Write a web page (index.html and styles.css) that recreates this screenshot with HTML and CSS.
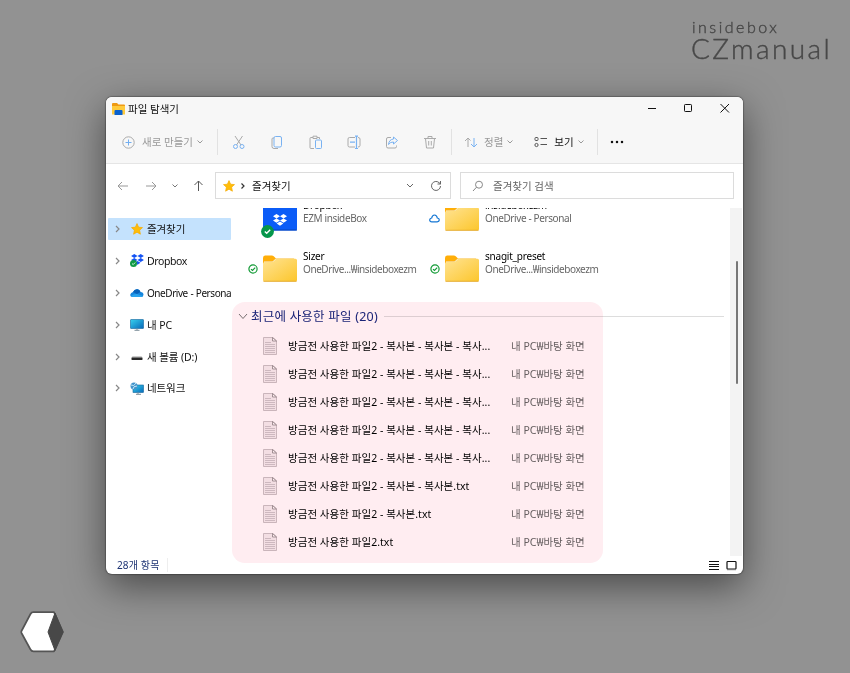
FILE: index.html
```html
<!DOCTYPE html>
<html lang="ko">
<head>
<meta charset="utf-8">
<title>파일 탐색기</title>
<link rel="stylesheet" href="styles.css">
</head>
<body>
<svg class="defs" width="0" height="0">
  <defs>
    <linearGradient id="gold" x1="0" y1="0" x2="1" y2="1"><stop offset="0" stop-color="#ffe393"/><stop offset="1" stop-color="#fcc62b"/></linearGradient>
    <linearGradient id="screen" x1="0" y1="0" x2="1" y2="1"><stop offset="0" stop-color="#36d0ee"/><stop offset="1" stop-color="#0869b9"/></linearGradient>
    <symbol id="chev" viewBox="0 0 8 10"><path d="M2 2 5 5 2 8" fill="none" stroke="#888" stroke-width="1.200"/></symbol>
    <symbol id="down" viewBox="0 0 8 6"><path d="M1.500 1.500 4 4 6.500 1.500" fill="none" stroke="currentColor"/></symbol>
    <symbol id="star" viewBox="0 0 12 12"><path d="M6 .6 7.600 4.200 11.500 4.600 8.600 7.200 9.400 11.200 6 9.200 2.600 11.200 3.400 7.200.5 4.600 4.400 4.200Z" fill="#ffbd0a" stroke="#f5ab00" stroke-width=".7" stroke-linejoin="round"/></symbol>
    <symbol id="box" viewBox="0 0 14 12"><path d="M3.500 0 7 2.200 3.500 4.400 0 2.200ZM10.500 0 14 2.200 10.500 4.400 7 2.200ZM3.500 4.400 7 6.600 3.500 8.800 0 6.600ZM10.500 4.400 14 6.600 10.500 8.800 7 6.600ZM7 7.500 10.300 9.600 7 11.800 3.700 9.600Z" fill="currentColor"/></symbol>
    <symbol id="folder" viewBox="0 0 34 27"><path d="M0 3Q0 .5 2 .5H9Q10.500.5 11.500 2L13 3.500H31V10H0Z" fill="#ffae08"/><path d="M1 6.500H9.500L12.500 3.800H32V12H1Z" fill="#f4f0e2"/><path d="M0 8.500Q0 7 2 7H8.500Q10 7 11 6L12.500 4.500Q13.200 3.800 14.500 3.800H32.500Q34 3.800 34 5.300V25Q34 26.500 32.500 26.500H1.500Q0 26.500 0 25Z" fill="url(#gold)"/><path d="M.5 26.300H33.500" stroke="#dfa225" stroke-width=".8"/></symbol>
    <symbol id="ok" viewBox="0 0 10 10"><circle cx="5" cy="5" r="4.100" fill="#fff" stroke="#119a35" stroke-width="1.200"/><path d="M3 5.100 4.500 6.500 7.200 3.700" fill="none" stroke="#119a35" stroke-width="1.200"/></symbol>
    <symbol id="doc" viewBox="0 0 14 18"><path d="M.5.500H10L13.500 4V17.500H.5Z" fill="#f3eff1" stroke="#c4bcc0" stroke-width=".9"/><path d="M9.500.5V4H13.500Z" fill="#fff" stroke="#8d8588" stroke-width=".8"/><path d="M2 5.500H8M2 7.500H12M2 9.500H12M2 11.500H12M2 13.500H12M2 15.500H12" stroke="#c3bbc0" stroke-width=".8"/></symbol>
  </defs>
</svg>

<div class="brand"><div class="brand-top">insidebox</div><div class="brand-name">CZmanual</div></div>

<main class="window">
  <header class="titlebar">
    <svg class="app-icon" width="13" height="12" viewBox="0 0 13 12"><path d="M0 1Q0 0 1 0H5L6.500 1.500H12Q13 1.500 13 2.500V11H0Z" fill="#ef9a13"/><path d="M0 3H13V11.500H0Z" fill="#ffcb3c"/><path d="M2.500 12V8Q2.500 7 3.500 7H9.500Q10.500 7 10.500 8V12Z" fill="#0961cf"/></svg>
    <span class="title">파일 탐색기</span>
    <svg class="controls" width="84" height="12" viewBox="0 0 84 12" fill="none" stroke="#111"><path d="M0 6.500H8M72.500 2 81 10.500M81 2 72.500 10.500"/><rect x="36.500" y="2.500" width="7" height="7" rx=".8"/></svg>
  </header>

  <div class="toolbar">
    <div class="cell new">
      <svg width="13" height="13" viewBox="0 0 13 13" fill="none"><circle cx="6.500" cy="6.500" r="5.700" stroke="#aaa"/><path d="M6.500 3.500V9.500M3.500 6.500H9.500" stroke="#72aef0"/></svg>
      <span class="label dim">새로 만들기</span><svg class="dim" width="8" height="6"><use href="#down"/></svg>
    </div>
    <div class="cell actions">
      <svg width="14" height="15" viewBox="0 0 14 15" fill="none"><path d="M3 1 9 10M10.500 1 4.500 10" stroke="#aaa"/><circle cx="3.500" cy="11.500" r="2" stroke="#79b2f2"/><circle cx="10" cy="11.500" r="2" stroke="#79b2f2"/></svg>
      <svg width="14" height="15" viewBox="0 0 14 15" fill="none"><path d="M4 3H3Q2 3 2 4V11.500Q2 13.500 4 13.500H8" stroke="#aaa"/><rect x="4" y="1.500" width="7.500" height="10.500" rx="1.500" stroke="#79b2f2"/></svg>
      <svg width="14" height="15" viewBox="0 0 14 15" fill="none"><path d="M4 2.500H2Q1 2.500 1 3.500V12.500Q1 13.500 2 13.500H5M8 2.500H10.500V4M4 1.200H8V3.500H4Z" stroke="#aaa"/><rect x="6.500" y="5" width="6" height="8.500" rx="1" stroke="#79b2f2"/></svg>
      <svg width="14" height="15" viewBox="0 0 14 15" fill="none"><path d="M8 2.500H2.500Q1 2.500 1 4V10.500Q1 12 2.500 12H8M11 2.500Q13 2.500 13 4V10.500Q13 12 11 12" stroke="#aaa"/><path d="M3 7.200H8M9.500 1.500V13M8 1.200H11M8 13.500H11" stroke="#79b2f2" stroke-width="1.200"/></svg>
      <svg width="14" height="15" viewBox="0 0 14 15" fill="none"><path d="M6 2.500H3Q1.500 2.500 1.500 4V11.500Q1.500 13 3 13H10Q11.500 13 11.500 11.500V10.500" stroke="#aaa"/><path d="M8.500 2 12.500 5.500 8.500 9V7Q5.500 6.700 3.500 9.500 4 4.500 8.500 4Z" stroke="#79b2f2"/></svg>
      <svg width="14" height="15" viewBox="0 0 14 15" fill="none" stroke="#aaa"><path d="M1 3.500H13M5 3.500V1.500H9V3.500M2.500 3.500 3.500 13H10.500L11.500 3.500M5.700 6V10.500M8.300 6V10.500"/></svg>
    </div>
    <div class="cell view">
      <svg width="14" height="13" viewBox="0 0 14 13" fill="none"><path d="M4 11V2M1 5 4 2 6.500 4.500" stroke="#aaa"/><path d="M10 2V11M7 8 10 11 13 8" stroke="#79b2f2"/></svg>
      <span class="label dim sort">정렬</span><svg class="dim" width="8" height="6"><use href="#down"/></svg>
      <svg class="layout-icon" width="14" height="12" viewBox="0 0 14 12" fill="none" stroke="#555"><rect x="1" y="1.500" width="3" height="3" rx=".8"/><circle cx="2.500" cy="9" r="1.600"/><path d="M6.500 2.500H13M6.500 8.500H13"/></svg>
      <span class="label look">보기</span><svg class="dim" width="8" height="6"><use href="#down"/></svg>
    </div>
    <svg class="more" width="14" height="4" viewBox="0 0 14 4"><circle cx="2" cy="2" r="1.250"/><circle cx="7" cy="2" r="1.250"/><circle cx="12" cy="2" r="1.250"/></svg>
  </div>

  <div class="nav">
    <svg class="arrows" width="91" height="14" viewBox="0 0 91 14" fill="none" stroke="#999"><path d="M12 7H2M6 3 2 7 6 11M30 7H40M36 3 40 7 36 11"/><path d="M56.500 5.500 59 8 61.500 5.500" stroke="#777"/><path d="M82.500 12V2M78.500 6 82.500 2 86.500 6" stroke="#555"/></svg>
    <div class="field address">
      <svg width="12" height="12"><use href="#star"/></svg>
      <svg class="crumb" width="8" height="10" viewBox="0 0 8 10"><path d="M2.500 2.500 5 5 2.500 7.500" fill="none" stroke="#333" stroke-width="1.200"/></svg>
      <span class="label">즐겨찾기</span>
      <svg class="push" width="10" height="7" viewBox="0 0 10 7" fill="none" stroke="#666"><path d="M2 2 5 5 8 2"/></svg>
      <svg class="reload" width="12" height="12" viewBox="0 0 12 12" fill="none" stroke="#666"><path d="M10.500 6A4.500 4.500 0 1 1 9 2.600L10.500 4M10.500 1V4H7.500"/></svg>
    </div>
    <div class="field search">
      <svg width="12" height="12" viewBox="0 0 12 12" fill="none" stroke="#888"><circle cx="7" cy="4.700" r="3.500"/><path d="M4.500 7.200 1 11"/></svg>
      <span class="label">즐겨찾기 검색</span>
    </div>
  </div>

  <div class="body">
    <nav class="side">
      <div class="item active"><svg width="8" height="10"><use href="#chev"/></svg><svg class="ic" width="14" height="12"><use href="#star"/></svg><span>즐겨찾기</span></div>
      <div class="item"><svg width="8" height="10"><use href="#chev"/></svg><svg class="ic" width="14" height="14" viewBox="0 0 14 14"><use href="#box" x="1" width="13" height="11" color="#1453f4"/><circle cx="3.500" cy="9.500" r="3.500" fill="#119a45"/><path d="M2 9.500 3.200 10.600 5.200 8.500" fill="none" stroke="#fff" stroke-width=".8"/></svg><span class="latin">Dropbox</span></div>
      <div class="item"><svg width="8" height="10"><use href="#chev"/></svg><svg class="ic" width="14" height="10" viewBox="0 0 14 10"><path d="M3 9Q0 9 .3 6.500.7 4.500 3 4 4.500.7 7.500 1.200 9.700 1.500 10.500 4 13.500 4.300 13.500 6.700 13.400 9 11 9Z" fill="#1685dc"/><path d="M3 4Q4.500.7 7.500 1.200 9.700 1.500 10.500 4L7 6Z" fill="#0761b9"/><path d="M1 8Q4 5.500 7 6L13 8Q12.500 9 11 9H3Q1.600 9 1 8Z" fill="#28a3ee"/></svg><span class="latin drive">OneDrive - Persona</span></div>
      <div class="item"><svg width="8" height="10"><use href="#chev"/></svg><svg class="ic" width="14" height="12" viewBox="0 0 14 12"><rect x=".5" y=".5" width="13" height="9" rx=".5" fill="url(#screen)" stroke="#13659c" stroke-width=".6"/><path d="M7 9.500V11M4.500 11.300H9.500" stroke="#7c8e99"/></svg><span>내 PC</span></div>
      <div class="item"><svg width="8" height="10"><use href="#chev"/></svg><svg class="ic" width="14" height="12" viewBox="0 0 14 12"><path d="M2.500 5H11.500L12.500 7H1.500Z" fill="#ccc"/><rect x="1.500" y="6.500" width="11" height="2.500" rx=".4" fill="#292929"/></svg><span>새 볼륨 (D:)</span></div>
      <div class="item"><svg width="8" height="10"><use href="#chev"/></svg><svg class="ic" width="14" height="13" viewBox="0 0 14 13"><rect x="3" y="3" width="10.500" height="7.500" fill="url(#screen)" stroke="#13659c" stroke-width=".6"/><circle cx="4" cy="4" r="3.500" fill="#4594cb"/><path d="M1 3Q4 5 6 1M3 7Q3 4 7 4" fill="none" stroke="#c6e7f5"/><path d="M8 10.500V12M6 12.300H11" stroke="#7c8e99"/></svg><span>네트워크</span></div>
    </nav>

    <section class="content">
      <div class="tiles">
        <div class="tile">
          <span class="state"></span>
          <div class="thumb"><svg width="34" height="27" viewBox="0 0 34 27"><path d="M0 1H12L14 3H34V25Q34 26.500 32.500 26.500H1.500Q0 26.500 0 25Z" fill="#0b5cf7"/><path d="M0 26H34" stroke="#0745b8"/><use href="#box" x="10" y="10" width="14" height="12" color="#fff"/></svg>
          <svg class="badge" width="13" height="13" viewBox="0 0 13 13"><circle cx="6.500" cy="6.500" r="6.400" fill="#05964a"/><path d="M3.800 6.500 5.700 8.300 9.200 4.800" fill="none" stroke="#fff" stroke-width="1.400"/></svg></div>
          <div class="info"><b>Dropbox</b><span class="w1">EZM insideBox</span></div>
        </div>
        <div class="tile">
          <svg class="state cloud" width="11" height="9" viewBox="0 0 11 9"><path d="M2.800 7.800Q.7 7.800.7 5.900.8 4.200 2.700 4 3.200 1 5.500 1 7.800 1 8.300 4 10.300 4.200 10.300 5.900 10.200 7.800 8.200 7.800Z" fill="#fff" stroke="#1476d4" stroke-width="1.200"/></svg>
          <div class="thumb"><svg width="34" height="27"><use href="#folder"/></svg></div>
          <div class="info"><b>insideboxezm</b><span class="w2">OneDrive - Personal</span></div>
        </div>
        <div class="tile">
          <svg class="state" width="10" height="10"><use href="#ok"/></svg>
          <div class="thumb"><svg width="34" height="27"><use href="#folder"/></svg></div>
          <div class="info"><b>Sizer</b><span class="w3">OneDrive...₩insideboxezm</span></div>
        </div>
        <div class="tile">
          <svg class="state" width="10" height="10"><use href="#ok"/></svg>
          <div class="thumb"><svg width="34" height="27"><use href="#folder"/></svg></div>
          <div class="info"><b>snagit_preset</b><span class="w3">OneDrive...₩insideboxezm</span></div>
        </div>
      </div>
      <div class="group"><svg width="10" height="7" viewBox="0 0 10 7" fill="none" stroke="#777"><path d="M1 1 5 5.500 9 1"/></svg><h2>최근에 사용한 파일 (20)</h2></div>
      <div class="files">
        <div class="file"><svg width="14" height="18"><use href="#doc"/></svg><span class="name">방금전 사용한 파일2 - 복사본 - 복사본 - 복사...</span><span class="place">내 PC₩바탕 화면</span></div>
        <div class="file"><svg width="14" height="18"><use href="#doc"/></svg><span class="name">방금전 사용한 파일2 - 복사본 - 복사본 - 복사...</span><span class="place">내 PC₩바탕 화면</span></div>
        <div class="file"><svg width="14" height="18"><use href="#doc"/></svg><span class="name">방금전 사용한 파일2 - 복사본 - 복사본 - 복사...</span><span class="place">내 PC₩바탕 화면</span></div>
        <div class="file"><svg width="14" height="18"><use href="#doc"/></svg><span class="name">방금전 사용한 파일2 - 복사본 - 복사본 - 복사...</span><span class="place">내 PC₩바탕 화면</span></div>
        <div class="file"><svg width="14" height="18"><use href="#doc"/></svg><span class="name">방금전 사용한 파일2 - 복사본 - 복사본 - 복사...</span><span class="place">내 PC₩바탕 화면</span></div>
        <div class="file"><svg width="14" height="18"><use href="#doc"/></svg><span class="name">방금전 사용한 파일2 - 복사본 - 복사본.txt</span><span class="place">내 PC₩바탕 화면</span></div>
        <div class="file"><svg width="14" height="18"><use href="#doc"/></svg><span class="name">방금전 사용한 파일2 - 복사본.txt</span><span class="place">내 PC₩바탕 화면</span></div>
        <div class="file"><svg width="14" height="18"><use href="#doc"/></svg><span class="name">방금전 사용한 파일2.txt</span><span class="place">내 PC₩바탕 화면</span></div>
      </div>
    </section>
    <div class="scroll"><div class="thumbbar"></div></div>
  </div>

  <footer class="status"><span class="count">28개 항목</span>
    <svg width="29" height="11" viewBox="0 0 29 11" fill="none" stroke="#111"><path d="M1 1.500H11M1 4.500H11M1 6.500H11M1 9.500H11"/><rect x="19" y="1.500" width="9" height="7.500" rx=".8" stroke-width="1.200"/><path d="M19 9.700H28" stroke="#777"/></svg>
  </footer>
  <div class="highlight"></div>
</main>

<svg class="emblem" width="44" height="42" viewBox="0 0 44 42"><path d="M13.500 1.200H34L43 21 34 40.300H13.500Q11.500 40.300 10.500 38.500L1.500 22Q1 21 1.500 20L10.500 3Q11.500 1.200 13.500 1.200Z" fill="#fff" stroke="#555" stroke-width="1.700" stroke-linejoin="round"/><path d="M35 2 43 21 35 39.500 28 21Z" fill="#484848" stroke="#484848" stroke-linejoin="round"/></svg>
</body>
</html>
```

FILE: styles.css
```css
* { box-sizing: border-box; }
body {
  margin: 0; width: 850px; height: 673px; overflow: hidden; position: relative;
  background: #929292; color: #111;
  font: 10.5px/14px "Noto Sans", "Noto Sans CJK KR", sans-serif;
  white-space: nowrap;
}
svg { display: block; flex: none; }
.defs { position: absolute; }
.brand { position: absolute; left: 691px; top: 17px; color: #484848; font-family: Lato, sans-serif; font-weight: 300; -webkit-text-stroke: .4px #484848; }
.brand-top { font-size: 16px; line-height: 20px; letter-spacing: 2.500px; padding-left: 1px; }
.brand-name { font-size: 28px; line-height: 28px; margin-top: -3px; letter-spacing: 2.4px; }
.emblem { position: absolute; left: 20px; top: 611px; }

.window {
  position: relative; width: 637px; height: 477px; margin: 97px 0 0 106px;
  display: flex; flex-direction: column; background: #fff; border-radius: 6px;
  padding-left: 1px;
  box-shadow: 0 0 1px 1px rgba(0,0,0,.25), 0 12px 38px rgba(0,0,0,.5);
}
.titlebar, .toolbar { margin-left: -1px; }
.titlebar { height: 23px; display: flex; align-items: center; background: #f7f7f7; border-radius: 6px 6px 0 0; padding-left: 6px; }
.title { margin: 0 0 0 3px; }
.controls { margin: -1px 11px 0 auto; }

.toolbar { height: 44px; display: flex; align-items: center; background: #f7f7f7; border-bottom: 1px solid #e5e5e5; padding: 1px 0 0 1px; }
.cell { height: 26px; display: flex; align-items: center; border-right: 1px solid #e2e2e2; }
.new { width: 111px; padding-left: 15px; }
.new .label { margin: 0 3px 0 7px; }
.dim { color: #999; }
.actions { width: 234px; padding-left: 14px; gap: 24.3px; }
.view { width: 146px; padding-left: 12px; }
.sort { margin: 0 3px 0 6px; }
.look { margin: 0 3px 0 6px; }
.layout-icon { margin-left: 20px; }
.more { margin-left: 12px; fill: #111; }

.nav { height: 44px; display: flex; align-items: center; padding: 0 0 1px 9px; }
.field { height: 27px; display: flex; align-items: center; border: 1px solid #dcdcdc; }
.address { width: 236px; margin-left: 8px; padding: 0 8px 0 7px; }
.crumb { margin: 0 5px 0 4px; }
.push { margin-left: auto; }
.reload { margin-left: 15px; }
.search { width: 274px; margin-left: 9px; padding-left: 11px; color: #666; }
.search .label { margin-left: 9px; }

.body { height: 348px; display: flex; }
.side { width: 125px; padding: 10px 1px 0; display: flex; flex-direction: column; gap: 9.9px; }
.item { height: 22px; display: flex; align-items: center; width: 123px; padding: 0 0 0 6px; }
.item.active { background: #c4e2fd; border-radius: 1px; }
.ic { margin: 0 3px 0 8px; }
.item span { letter-spacing: -.1px; }
.item .latin { letter-spacing: -.4px; }
.item .drive { font-size: 10px; letter-spacing: -.45px; word-spacing: .5px; }

.content { width: 498px; overflow: hidden; }
.tiles { display: grid; grid-template-columns: 182px 182px; grid-auto-rows: 51px; margin: -16px 0 0 15px; }
.tile { display: flex; }
.state { width: 10px; margin: 21px 5px 0 1px; flex: none; }
.cloud { width: 11px; margin-right: 4px; margin-left: 0; margin-top: 22px; }
.cloud + .thumb { margin-left: 1px; }
.thumb { margin-top: 12px; position: relative; }
.badge { position: absolute; left: -2px; top: 21px; }
.info { margin: 7px 0 0 6px; display: flex; flex-direction: column; line-height: 12.500px; }
.info b { font-weight: 400; color: #000; font-size: 10px; line-height: 13px; letter-spacing: -.22px; }
.info span { color: #666; font-size: 10px; }
.w1 { letter-spacing: -.37px; }
.w2 { letter-spacing: -.39px; }
.w3 { letter-spacing: -.43px; }

.group { display: flex; align-items: center; height: 20px; margin: 12px 6px 0 6px; padding-top: 1px; }
.group h2 { margin: 0 0 0 3px; font-size: 12.500px; font-weight: 400; color: #1b267e; line-height: 20px; letter-spacing: .22px; }
.group::after { content: ""; flex: 1; height: 1px; margin-left: 6px; background: #ddd; }
.files { padding: 6px 0 0 31px; }
.file { height: 27.950px; display: flex; align-items: center; }
.name { width: 234px; padding-left: 11px; color: #000; letter-spacing: .04px; }
.place { color: #666; }

.scroll { width: 12px; background: #f3f3f3; padding: 53px 0 0 6px; }
.thumbbar { width: 2px; height: 123px; background: #777; border-radius: 1px; }

.status { height: 18px; display: flex; align-items: center; justify-content: space-between; padding: 0 6px 0 10px; color: #1c3272; }
.count { font-size: 10px; letter-spacing: .15px; padding-right: 7px; border-right: 1px solid #eee; }
.highlight { position: absolute; left: 126px; top: 205px; width: 371px; height: 261px; border-radius: 13px; background: #ffedf1; mix-blend-mode: multiply; }
```
